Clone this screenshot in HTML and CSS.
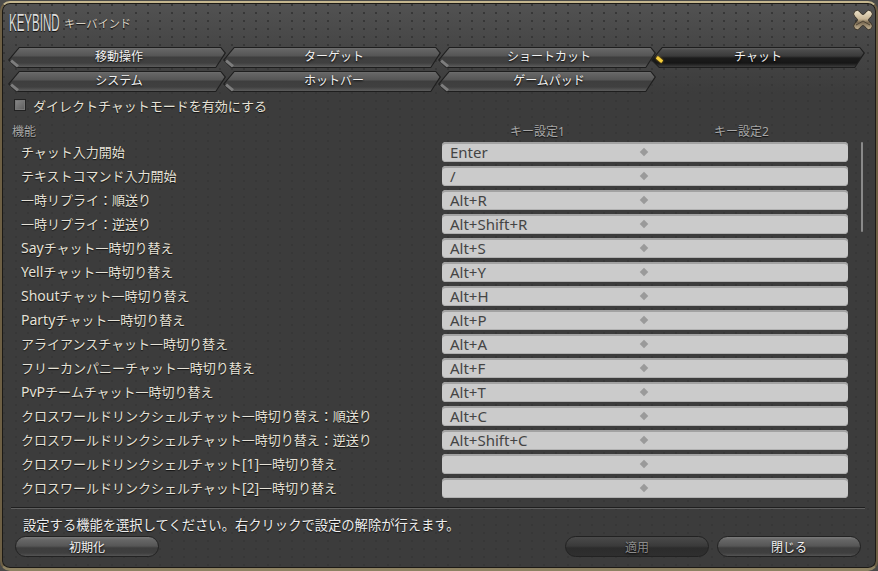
FILE: index.html
```html
<!DOCTYPE html>
<html lang="ja">
<head>
<meta charset="UTF-8">
<title>Keybind</title>
<link rel="stylesheet" href="styles.css">
</head>
<body>
<div class="window">
    <div class="header">
        <span class="title-en"><span>KEYBIND</span></span>
        <span class="title-jp">キーバインド</span>
        <svg class="close" width="22" height="22" viewBox="0 0 22 22">
            <defs>
                <linearGradient id="bone" x1="0" y1="0" x2="0" y2="1">
                    <stop offset="0" stop-color="#efe4cb"/>
                    <stop offset="0.45" stop-color="#c8b696"/>
                    <stop offset="0.62" stop-color="#7a6a52"/>
                    <stop offset="1" stop-color="#c9b898"/>
                </linearGradient>
            </defs>
            <path d="M3 2 Q6 0 8 3 Q11 8 14 3 Q16 0 19 2 Q22 5 19 8 Q14 11 19 14 Q22 17 19 20 Q16 22 14 19 Q11 14 8 19 Q6 22 3 20 Q0 17 3 14 Q8 11 3 8 Q0 5 3 2 Z" fill="url(#bone)" stroke="#3a342a" stroke-width="1"/>
            <path d="M4 16 Q8 14 11 12 Q14 14 18 16" fill="none" stroke="#4d4334" stroke-width="1"/>
        </svg>
    </div>
    <div class="tabs">
        <div class="tab">移動操作</div>
        <div class="tab">ターゲット</div>
        <div class="tab">ショートカット</div>
        <div class="tab active">チャット</div>
        <div class="tab">システム</div>
        <div class="tab">ホットバー</div>
        <div class="tab">ゲームパッド</div>
    </div>
    <label class="direct"><span class="checkbox"></span>ダイレクトチャットモードを有効にする</label>
    <div class="columns">
        <span>機能</span>
        <span class="col-key">キー設定1</span>
        <span class="col-key">キー設定2</span>
    </div>
    <div class="list-wrap">
        <div class="list" id="list"></div>
        <div class="scroll"></div>
    </div>
    <div class="divider"></div>
    <div class="help">設定する機能を選択してください。右クリックで設定の解除が行えます。</div>
    <div class="actions">
        <button class="btn">初期化</button>
        <span class="spacer"></span>
        <button class="btn disabled">適用</button>
        <button class="btn close-btn">閉じる</button>
    </div>
</div>
<script>
    const rows = [
        ['チャット入力開始', 'Enter'],
        ['テキストコマンド入力開始', '/'],
        ['一時リプライ：順送り', 'Alt+R'],
        ['一時リプライ：逆送り', 'Alt+Shift+R'],
        ['Sayチャット一時切り替え', 'Alt+S'],
        ['Yellチャット一時切り替え', 'Alt+Y'],
        ['Shoutチャット一時切り替え', 'Alt+H'],
        ['Partyチャット一時切り替え', 'Alt+P'],
        ['アライアンスチャット一時切り替え', 'Alt+A'],
        ['フリーカンパニーチャット一時切り替え', 'Alt+F'],
        ['PvPチームチャット一時切り替え', 'Alt+T'],
        ['クロスワールドリンクシェルチャット一時切り替え：順送り', 'Alt+C'],
        ['クロスワールドリンクシェルチャット一時切り替え：逆送り', 'Alt+Shift+C'],
        ['クロスワールドリンクシェルチャット[1]一時切り替え', ''],
        ['クロスワールドリンクシェルチャット[2]一時切り替え', '']
    ];
    const list = document.getElementById('list');
    rows.forEach(r => {
        const row = document.createElement('div');
        row.className = 'row';
        const label = document.createElement('span');
        label.className = 'label';
        // latin words run a bit larger than the kana
        r[0].split(/([A-Za-z0-9\[\]]+)/).forEach(part => {
            if (/^[A-Za-z0-9\[\]]+$/.test(part)) {
                const latin = document.createElement('span');
                latin.className = 'latin';
                latin.textContent = part;
                label.appendChild(latin);
            } else {
                label.appendChild(document.createTextNode(part));
            }
        });
        const key = document.createElement('div');
        key.className = 'key';
        const first = document.createElement('span');
        first.className = 'key-cell';
        first.textContent = r[1];
        const mark = document.createElement('span');
        mark.className = 'diamond';
        const second = document.createElement('span');
        second.className = 'key-cell';
        key.append(first, mark, second);
        row.append(label, key);
        list.appendChild(row);
    });
</script>
</body>
</html>
```

FILE: styles.css
```css
html, body {
    margin: 0;
    height: 100%;
}
body {
    background-color: #4a4a48;
    font-family: "Noto Sans", "Noto Sans CJK JP", sans-serif;
    overflow: hidden;
}
.window {
    box-sizing: border-box;
    width: 878px;
    height: 570px;
    margin-top: 1px;
    padding: 6px 13px 10px 11px;
    border-style: solid;
    border-width: 2px 2px 3px 2px;
    border-color: #c4b68e #6e6045 #8e8262 #6e6045;
    border-radius: 10px;
    box-shadow: inset 0 0 0 1px #1c1a16;
    background-color: #3c3c3c;
    background-image:
        radial-gradient(circle at 2px 2px, #373737 1px, transparent 1.5px),
        linear-gradient(180deg, #525252 0, #474747 40px, #3c3c3c 90px);
    background-size: 12px 8px, 100% 100%;
    display: flex;
    flex-direction: column;
}
.header {
    display: flex;
    align-items: center;
    height: 27px;
    margin-left: -4px;
    margin-right: -11px;
}
.title-en {
    width: 50px;
    font-family: "Liberation Sans", sans-serif;
    font-size: 24px;
    color: #dcdcdc;
    text-shadow: 0 1px 1px #111;
}
.title-en span {
    display: inline-block;
    transform: scaleX(0.48);
    transform-origin: left center;
}
.title-jp {
    margin-left: 5px;
    font-size: 11.2px;
    color: #d8d2c4;
    text-shadow: 0 1px 1px #111;
}
.close {
    margin-left: auto;
    margin-top: -6px;
}
.tabs {
    display: grid;
    grid-template-columns: repeat(4, 215px);
    grid-auto-rows: 21px;
    row-gap: 3px;
    margin: 11px 0 0 -5px;
}
.tab {
    position: relative;
    z-index: 0;
    margin-right: -3px;
    padding-left: 4px;
    background-color: #1e1e1e;
    clip-path: polygon(11px 0, 213px 0, 218px 6px, 208px 21px, 8px 21px, 0 13px);
    color: #f2f2f2;
    font-size: 12px;
    line-height: 20px;
    text-align: center;
    text-shadow: 0 1px 2px #000;
}
.tab::before {
    content: "";
    position: absolute;
    inset: 0;
    z-index: -1;
    background: linear-gradient(180deg, #7a7a7a 0, #666 2px, #555 9px, #3e3e3e 10px, #404040 16px, #5c5c5c 20px);
    clip-path: polygon(11.5px 1px, 212.5px 1px, 216.5px 6px, 207.5px 20px, 8.5px 20px, 1.5px 13px);
}
.tab::after {
    content: "";
    position: absolute;
    left: 2px;
    top: 15px;
    width: 9px;
    height: 3px;
    background-color: #7d7d7d;
    transform: rotate(40deg);
}
.tab.active {
    margin-left: -2px;
    margin-right: 3px;
    padding-left: 0;
    clip-path: polygon(11px 0, 209px 0, 214px 6px, 204px 21px, 8px 21px, 0 13px);
}
.tab.active::before {
    background: linear-gradient(180deg, #666 0, #4c4c4c 3px, #3a3a3a 9px, #1c1c1c 11px, #161616 16px, #3c3c3c 20px);
    clip-path: polygon(11.5px 1px, 208.5px 1px, 212.5px 6px, 203.5px 20px, 8.5px 20px, 1.5px 13px);
}
.tab.active::after {
    left: 5px;
    top: 11px;
    width: 7px;
    height: 3px;
    background-color: #f6cf3c;
    box-shadow: 0 0 2px #d9a514;
}
.direct {
    display: flex;
    align-items: center;
    gap: 7px;
    height: 18px;
    margin: 4px 0 0 1px;
    color: #e6e2d8;
    font-size: 13px;
    text-shadow: 0 1px 1px #111;
}
.checkbox {
    box-sizing: border-box;
    width: 12px;
    height: 12px;
    border: 1px solid #222;
    background: linear-gradient(135deg, #8a8a8a, #5c5c5c);
    box-shadow: inset 0 0 0 1px #777;
}
.columns {
    display: grid;
    grid-template-columns: 428px 205px 203px;
    height: 18px;
    margin: 8px 0 0 -1px;
    align-items: center;
    color: #a8a8a8;
    font-size: 12px;
    text-shadow: 0 1px 1px #111;
}
.col-key {
    text-align: center;
    transform: translateX(-5px);
}
.list-wrap {
    display: flex;
    margin-top: 2px;
}
.list {
    width: 835px;
}
.row {
    display: grid;
    grid-template-columns: 429px 406px;
    height: 24px;
}
.label {
    padding-left: 8px;
    line-height: 20px;
    color: #e6e2d8;
    font-size: 13px;
    text-shadow: 0 1px 1px #111;
    white-space: nowrap;
}
.latin {
    font-size: 14px;
}
.key {
    display: grid;
    grid-template-columns: 191px 7px 1fr;
    align-items: center;
    height: 20px;
    padding-left: 8px;
    border-radius: 4px;
    background-color: #cbcbcb;
    box-shadow: inset 0 2px 0 #a2a2a2, inset 0 -1px 0 #b0b0b0;
    color: #444;
    font-size: 15px;
}
.key-cell {
    line-height: 20px;
}
.diamond {
    width: 6px;
    height: 6px;
    background-color: #9a9a9a;
    transform: rotate(45deg);
}
.scroll {
    width: 4px;
    height: 90px;
    margin-left: 13px;
    border-radius: 2px;
    background-color: #8a8a8a;
}
.divider {
    height: 1px;
    margin: 5px -2px 0 -2px;
    background-color: #1f1f1f;
    border-bottom: 1px solid #5f5f5f;
}
.help {
    margin: 7px 0 0 10px;
    height: 20px;
    line-height: 18px;
    color: #eee;
    font-size: 13.3px;
    text-shadow: 0 1px 1px #111;
}
.actions {
    display: flex;
    gap: 8px;
    margin: 0 2px 0 2px;
}
.spacer {
    flex: 1;
}
.btn {
    width: 144px;
    height: 21px;
    padding: 0;
    border: 1px solid #222;
    border-radius: 11px;
    background: linear-gradient(180deg, #7a7a7a 0, #666 3px, #565656 9px, #3d3d3d 11px, #3f3f3f 16px, #5a5a5a 20px);
    color: #f2f2f2;
    font-family: inherit;
    font-size: 12px;
    text-shadow: 0 1px 2px #000;
}
.btn.disabled {
    background: linear-gradient(180deg, #4a4a4a 0, #3a3a3a 9px, #2c2c2c 11px, #2f2f2f 20px);
    color: #8c8c8c;
}
```
